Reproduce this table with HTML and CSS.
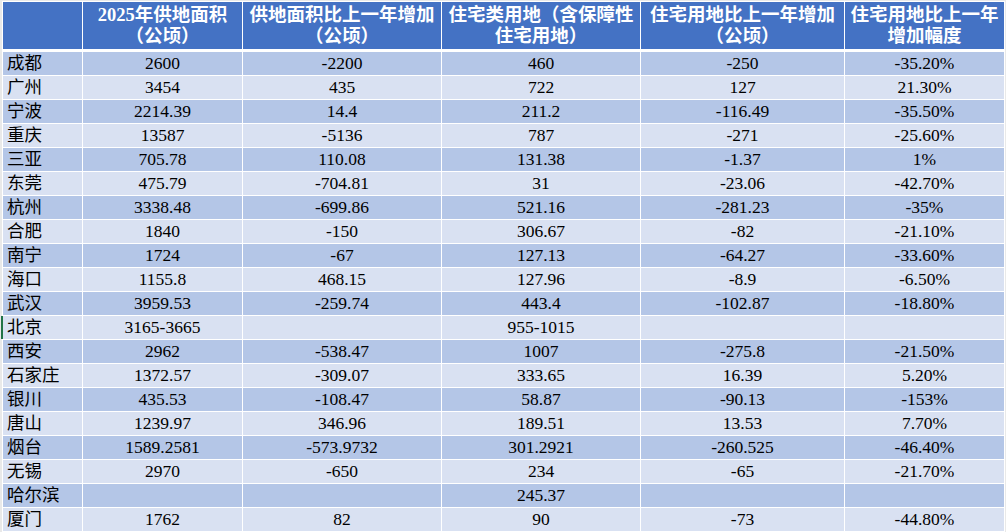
FILE: index.html
```html
<!DOCTYPE html>
<html lang="zh-CN">
<head>
<meta charset="utf-8">
<title>2025年供地面积</title>
<link rel="stylesheet" href="styles.css">
</head>
<body>
<div class="sheet">
<table class="grid">
<colgroup>
<col class="c1"><col class="c2"><col class="c3"><col class="c4"><col class="c5"><col class="c6">
</colgroup>
<thead>
<tr>
<th></th>
<th>2025年供地面积<br>（公顷）</th>
<th>供地面积比上一年增加<br>（公顷）</th>
<th>住宅类用地（含保障性<br>住宅用地）</th>
<th>住宅用地比上一年增加<br>（公顷）</th>
<th>住宅用地比上一年<br>增加幅度</th>
</tr>
</thead>
<tbody>
<tr><td>成都</td><td>2600</td><td>-2200</td><td>460</td><td>-250</td><td>-35.20%</td></tr>
<tr><td>广州</td><td>3454</td><td>435</td><td>722</td><td>127</td><td>21.30%</td></tr>
<tr><td>宁波</td><td>2214.39</td><td>14.4</td><td>211.2</td><td>-116.49</td><td>-35.50%</td></tr>
<tr><td>重庆</td><td>13587</td><td>-5136</td><td>787</td><td>-271</td><td>-25.60%</td></tr>
<tr><td>三亚</td><td>705.78</td><td>110.08</td><td>131.38</td><td>-1.37</td><td>1%</td></tr>
<tr><td>东莞</td><td>475.79</td><td>-704.81</td><td>31</td><td>-23.06</td><td>-42.70%</td></tr>
<tr><td>杭州</td><td>3338.48</td><td>-699.86</td><td>521.16</td><td>-281.23</td><td>-35%</td></tr>
<tr><td>合肥</td><td>1840</td><td>-150</td><td>306.67</td><td>-82</td><td>-21.10%</td></tr>
<tr><td>南宁</td><td>1724</td><td>-67</td><td>127.13</td><td>-64.27</td><td>-33.60%</td></tr>
<tr><td>海口</td><td>1155.8</td><td>468.15</td><td>127.96</td><td>-8.9</td><td>-6.50%</td></tr>
<tr><td>武汉</td><td>3959.53</td><td>-259.74</td><td>443.4</td><td>-102.87</td><td>-18.80%</td></tr>
<tr><td class="selected">北京</td><td>3165-3665</td><td></td><td>955-1015</td><td></td><td></td></tr>
<tr><td>西安</td><td>2962</td><td>-538.47</td><td>1007</td><td>-275.8</td><td>-21.50%</td></tr>
<tr><td>石家庄</td><td>1372.57</td><td>-309.07</td><td>333.65</td><td>16.39</td><td>5.20%</td></tr>
<tr><td>银川</td><td>435.53</td><td>-108.47</td><td>58.87</td><td>-90.13</td><td>-153%</td></tr>
<tr><td>唐山</td><td>1239.97</td><td>346.96</td><td>189.51</td><td>13.53</td><td>7.70%</td></tr>
<tr><td>烟台</td><td>1589.2581</td><td>-573.9732</td><td>301.2921</td><td>-260.525</td><td>-46.40%</td></tr>
<tr><td>无锡</td><td>2970</td><td>-650</td><td>234</td><td>-65</td><td>-21.70%</td></tr>
<tr><td>哈尔滨</td><td></td><td></td><td>245.37</td><td></td><td></td></tr>
<tr><td>厦门</td><td>1762</td><td>82</td><td>90</td><td>-73</td><td>-44.80%</td></tr>
</tbody>
</table>
</div>
</body>
</html>
```

FILE: styles.css
```css
html, body {
  margin: 0;
  padding: 0;
  background: #ffffff;
}

.sheet {
  padding-top: 1px;
  padding-left: 2px;
  background: #e9e9e9;
  width: 1006px;
  height: 532px;
  box-sizing: border-box;
  overflow: hidden;
}

.grid {
  table-layout: fixed;
  width: 1003px;
  border-collapse: separate;
  border-spacing: 1px;
  background: #ffffff;
  font-family: "Liberation Serif", "Noto Sans CJK SC", serif;
  font-size: 17.5px;
  color: #000000;
}

.c1 { width: 79px; }
.c2 { width: 159px; }
.c3 { width: 198px; }
.c4 { width: 198px; }
.c5 { width: 203px; }
.c6 { width: 159px; }

.grid th {
  background: #4472c4;
  color: #ffffff;
  font-weight: bold;
  font-size: 18.5px;
  line-height: 21px;
  height: 47px;
  padding: 0;
  border-bottom: 2px solid #ffffff;
  text-align: center;
  vertical-align: middle;
  white-space: nowrap;
  overflow: hidden;
}

.grid td {
  height: 23px;
  line-height: 23px;
  padding: 0;
  text-align: center;
  vertical-align: middle;
  white-space: nowrap;
  overflow: hidden;
}

.grid td:first-child {
  text-align: left;
  padding-left: 4px;
}

.grid tbody tr:nth-child(odd) td {
  background: #b4c6e7;
}

.grid tbody tr:nth-child(even) td {
  background: #d9e1f2;
}

.grid td.selected {
  box-shadow: -2px 0 0 #217346;
}
```
